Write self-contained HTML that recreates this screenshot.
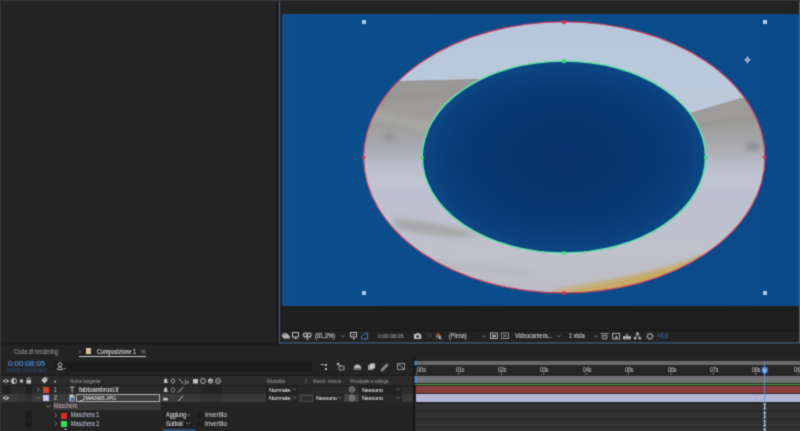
<!DOCTYPE html>
<html><head><meta charset="utf-8">
<style>
*{margin:0;padding:0;box-sizing:border-box}
html,body{width:800px;height:431px;overflow:hidden;background:#1a1a1a;font-family:"Liberation Sans",sans-serif;}
.w{position:absolute;left:0;top:0;width:800px;height:431px;overflow:hidden;filter:url(#soft)}
.a{position:absolute}
.t{position:absolute;white-space:nowrap;transform-origin:0 50%;font-size:6px;line-height:8px;color:#a8a8a8}
</style></head><body><svg width="0" height="0" style="position:absolute"><filter id="soft" x="0" y="0" width="100%" height="100%" color-interpolation-filters="sRGB"><feConvolveMatrix order="3" kernelMatrix="0.028 0.111 0.028 0.111 0.446 0.111 0.028 0.111 0.028" edgeMode="duplicate"/></filter></svg><div class="w">
<div class="a" style="left:0;top:0;width:800px;height:431px;background:#1c1c1c"></div>
<!-- left panel -->
<div class="a" style="left:0;top:0;width:278px;height:343px;background:#232323"></div>
<div class="a" style="left:0;top:0;width:800px;height:1px;background:#3a3a3a"></div>
<!-- viewer panel -->
<div class="a" style="left:276px;top:1px;width:3px;height:342px;background:#1c1c1c"></div>
<div class="a" style="left:279px;top:1px;width:521px;height:342.5px;background:#222222;border-left:1.2px solid #51618a;border-bottom:2px solid #34475f"></div>
<!-- canvas -->
<svg class="a" style="left:282px;top:14px" width="518" height="292" viewBox="282 14 518 292">
 <defs>
  <linearGradient id="ih" x1="0" y1="0" x2="1" y2="0">
   <stop offset="0.00" stop-color="rgb(10,70,132)"/>
   <stop offset="0.10" stop-color="rgb(10,68,129)"/>
   <stop offset="0.20" stop-color="rgb(9,63,122)"/>
   <stop offset="0.30" stop-color="rgb(8,57,115)"/>
   <stop offset="0.40" stop-color="rgb(7,53,109)"/>
   <stop offset="0.50" stop-color="rgb(7,52,108)"/>
   <stop offset="0.60" stop-color="rgb(7,53,109)"/>
   <stop offset="0.70" stop-color="rgb(8,57,115)"/>
   <stop offset="0.80" stop-color="rgb(9,63,122)"/>
   <stop offset="0.90" stop-color="rgb(10,68,129)"/>
   <stop offset="1.00" stop-color="rgb(10,70,132)"/>
  </linearGradient>
  <radialGradient id="ig" cx="0.5" cy="0.5" r="0.5">
   <stop offset="0" stop-color="#06326a"/>
   <stop offset="0.5" stop-color="#07376e"/>
   <stop offset="0.75" stop-color="#083c75"/>
   <stop offset="0.9" stop-color="#0a417d"/>
   <stop offset="1" stop-color="#0b4886"/>
  </radialGradient>
  <linearGradient id="cv" x1="0" y1="0" x2="1" y2="0">
   <stop offset="0" stop-color="#0c5192"/>
   <stop offset="0.03" stop-color="#0b4e8c"/>
   <stop offset="1" stop-color="#0a4a88"/>
  </linearGradient>
  <linearGradient id="sky" x1="0" y1="21" x2="0" y2="120" gradientUnits="userSpaceOnUse">
   <stop offset="0" stop-color="#b6c6db"/>
   <stop offset="0.5" stop-color="#bac8db"/>
   <stop offset="1" stop-color="#bfcada"/>
  </linearGradient>
  <linearGradient id="hill" x1="0" y1="78" x2="0" y2="172" gradientUnits="userSpaceOnUse">
   <stop offset="0" stop-color="#9a9896"/>
   <stop offset="0.5" stop-color="#9f9e9d"/>
   <stop offset="0.72" stop-color="#a7a8ad"/>
   <stop offset="0.86" stop-color="#b3b6c1"/>
   <stop offset="1" stop-color="#bbbfcd" stop-opacity="0"/>
  </linearGradient>
  <linearGradient id="fog" x1="0" y1="150" x2="0" y2="295" gradientUnits="userSpaceOnUse">
   <stop offset="0" stop-color="#babecc"/>
   <stop offset="0.3" stop-color="#bdc1cf"/>
   <stop offset="0.7" stop-color="#bfc1cc"/>
   <stop offset="1" stop-color="#bcbbc3"/>
  </linearGradient>
  <filter id="bl" x="-10%" y="-10%" width="120%" height="120%"><feGaussianBlur stdDeviation="2.5"/></filter>
  <filter id="bl2" x="-10%" y="-10%" width="120%" height="120%"><feGaussianBlur stdDeviation="1.3"/></filter>
  <filter id="bl1" x="-10%" y="-10%" width="120%" height="120%"><feGaussianBlur stdDeviation="0.7"/></filter>
  <clipPath id="ring"><path clip-rule="evenodd" d="M363.7 157.4 A200.6 135.5 0 1 0 764.9 157.4 A200.6 135.5 0 1 0 363.7 157.4 Z M422.2 157 A141.7 96 0 1 0 705.6 157 A141.7 96 0 1 0 422.2 157 Z"/></clipPath>
 </defs>
 <rect x="282" y="14" width="518" height="292" fill="url(#cv)"/>
 <g clip-path="url(#ring)">
  <rect x="350" y="15" width="430" height="285" fill="url(#sky)"/>
  <rect x="350" y="140" width="430" height="160" fill="url(#fog)"/>
  <path d="M350 84 L399 81 L475 79 L520 80 L520 168 L350 168 Z" fill="url(#hill)" filter="url(#bl1)"/>
  <path d="M660 118 L693 112 L741 98 L780 95 L780 172 L660 172 Z" fill="url(#hill)" filter="url(#bl1)"/>
  <g filter="url(#bl)">
   <path d="M368 108 L400 116 L440 124 L475 130 L475 136 L420 130 L368 118Z" fill="#b0afaa" opacity="0.5"/>
   <path d="M372 96 L420 92 L470 90 L470 94 L420 97 L372 101Z" fill="#8e8d8a" opacity="0.5"/>
   <path d="M690 125 L730 118 L770 116 L770 121 L730 123 L690 130Z" fill="#8e8d8a" opacity="0.45"/>
   <ellipse cx="389" cy="137" rx="5" ry="2" fill="#76787c" opacity="0.7"/>
   <ellipse cx="753" cy="147" rx="7" ry="3.5" fill="#7c8086" opacity="0.75"/>
   <path d="M700 146 L745 145 L745 149 L700 150Z" fill="#b5b3ad" opacity="0.6"/>
   <path d="M392 219 Q430 219 482 236 Q450 240 398 229Z" fill="#a2a1a2" opacity="0.8"/>
   <path d="M400 258 Q460 262 530 270 L530 275 Q460 270 400 264Z" fill="#b5b4b9" opacity="0.5"/>
   <rect x="360" y="176" width="420" height="12" fill="#c6c8d3" opacity="0.5"/>
  </g>
  <g filter="url(#bl2)">
   <path d="M705.7 256.6 L702.6 258.6 L699.4 260.6 L696.2 262.5 L692.9 264.3 L689.6 266.1 L686.2 267.9 L682.8 269.6 L679.3 271.3 L675.7 272.9 L672.1 274.5 L668.5 276.0 L664.8 277.4 L661.0 278.8 L657.2 280.2 L653.4 281.5 L649.6 282.7 L645.7 283.9 L641.7 285.0 L637.8 286.1 L633.8 287.1 L629.7 288.1 L625.7 289.0 L621.6 289.9 L617.5 290.7 L613.4 291.4 L609.2 292.1 L605.0 292.7 L600.8 293.2 L596.6 293.7 L592.4 294.2 L588.2 294.5 L583.9 294.8 L579.7 295.1 L575.4 295.3 L571.1 295.4 L566.8 295.5 L562.6 295.5 L558.3 295.4 L554.0 295.3 L549.8 295.2 L550.0 292.2 L554.2 290.0 L558.4 288.8 L562.6 287.9 L566.8 287.1 L571.0 286.2 L575.2 285.5 L579.4 284.7 L583.5 283.9 L587.7 283.2 L591.8 282.4 L595.9 281.7 L600.0 280.9 L604.0 280.1 L608.0 279.4 L612.0 278.6 L616.0 277.8 L619.9 277.0 L623.8 276.2 L627.6 275.4 L631.5 274.6 L635.3 273.8 L639.0 272.9 L642.7 272.1 L646.4 271.2 L650.1 270.3 L653.7 269.4 L657.3 268.5 L660.9 267.5 L664.5 266.5 L668.0 265.5 L671.5 264.4 L675.0 263.4 L678.5 262.2 L681.9 261.1 L685.4 259.9 L688.9 258.7 L692.3 257.5 L695.9 256.3 L699.5 255.1 L703.6 254.5Z" fill="#c2b07e" opacity="0.85"/>
   <path d="M689.6 266.1 L687.1 267.5 L684.5 268.8 L681.9 270.0 L679.3 271.3 L676.6 272.5 L673.9 273.7 L671.2 274.8 L668.5 276.0 L665.7 277.1 L662.9 278.1 L660.1 279.2 L657.2 280.2 L654.4 281.2 L651.5 282.1 L648.6 283.0 L645.7 283.9 L642.7 284.8 L639.8 285.6 L636.8 286.4 L633.8 287.1 L630.8 287.9 L627.7 288.6 L624.7 289.2 L621.6 289.9 L618.5 290.5 L615.4 291.0 L612.3 291.6 L609.2 292.1 L606.1 292.5 L602.9 293.0 L599.8 293.4 L596.6 293.7 L593.4 294.0 L590.3 294.3 L587.1 294.6 L583.9 294.8 L580.7 295.0 L577.5 295.2 L574.3 295.3 L571.1 295.4 L571.0 292.4 L574.2 290.8 L577.3 289.9 L580.5 289.1 L583.6 288.4 L586.7 287.7 L589.8 287.1 L592.9 286.4 L596.0 285.8 L599.1 285.2 L602.1 284.5 L605.2 283.9 L608.2 283.3 L611.2 282.6 L614.3 282.0 L617.2 281.4 L620.2 280.7 L623.2 280.1 L626.1 279.5 L629.0 278.8 L631.9 278.1 L634.8 277.5 L637.7 276.8 L640.5 276.1 L643.4 275.5 L646.2 274.8 L649.0 274.1 L651.8 273.4 L654.6 272.6 L657.4 271.9 L660.1 271.2 L662.9 270.4 L665.6 269.6 L668.3 268.9 L671.0 268.1 L673.7 267.3 L676.5 266.4 L679.2 265.6 L681.9 264.8 L684.7 264.1 L687.7 263.8Z" fill="#c6aa60" opacity="0.95"/>
  </g>
 </g>
 <ellipse cx="563.9" cy="157" rx="141.7" ry="96" fill="url(#ig)"/>
 <ellipse cx="564.3" cy="157.4" rx="200.6" ry="135.5" fill="none" stroke="#cc4560" stroke-width="1.2"/>
 <ellipse cx="563.9" cy="157" rx="141.7" ry="96" fill="none" stroke="#66e2a6" stroke-width="1.6"/>
 <g fill="#d8304e"><circle cx="564.1" cy="21.9" r="2.2"/><circle cx="564.1" cy="292.9" r="2"/><circle cx="363.6" cy="157.4" r="1.7"/><circle cx="764.6" cy="157.4" r="1.7"/></g>
 <g fill="#3fe07e"><circle cx="564" cy="61" r="2.3"/><circle cx="564" cy="253" r="1.9"/><circle cx="422.2" cy="157.5" r="1.8"/><circle cx="705.6" cy="157.5" r="1.8"/></g>
 <g fill="#abc8ee"><rect x="362" y="20" width="4" height="4"/><rect x="763" y="20" width="4" height="4"/><rect x="362" y="291" width="4" height="4"/><rect x="763" y="291" width="4" height="4"/></g>
 <path d="M747.5 56.2 Q748.3 59 751.1 59.8 Q748.3 60.6 747.5 63.4 Q746.7 60.6 743.9 59.8 Q746.7 59 747.5 56.2Z" fill="#dfe6f0"/>
 <circle cx="747.5" cy="59.8" r="1" fill="#3a5a86"/>
</svg>
<!-- viewer toolbar -->
<div class="a" style="left:280px;top:306px;width:520px;height:24px;background:#1f1f1f"></div>
<div class="a" style="left:280px;top:330px;width:520px;height:11px;background:#222222;border-top:1px solid #161616"></div>
<svg class="a" style="left:280px;top:330px" width="520" height="12" viewBox="280 330 520 12">
 <g fill="#bdbdbd">
  <path d="M281.5 335.5 l2.5 -2.5 h2.5 l3.5 3.5 v2 h-6.5z" fill="#b4b4b4"/><path d="M283.5 335.2 l1.5 -1.2 h1.5" stroke="#2a2a2a" stroke-width="0.6" fill="none"/>
  <rect x="292.5" y="332.5" width="6" height="4.5" fill="none" stroke="#bdbdbd" stroke-width="1"/><rect x="294" y="338" width="3" height="1"/>
  <circle cx="305.5" cy="335" r="2" fill="none" stroke="#c8c8c8" stroke-width="1.1"/><circle cx="309" cy="335" r="2" fill="none" stroke="#c8c8c8" stroke-width="1.1"/><rect x="306.5" y="338" width="2" height="1.5"/>
  <rect x="350.5" y="332.5" width="6" height="4.5" fill="none" stroke="#bdbdbd" stroke-width="1"/><rect x="352.5" y="334.3" width="2" height="1"/><rect x="353" y="338" width="1.5" height="1.5"/>
  <path d="M414 334 h2 l0.8 -1.1 h1.8 l0.8 1.1 h1.8 v5 h-7.2 z"/><circle cx="417.6" cy="336.6" r="1.3" fill="#2a2a2a"/>
 </g>
 <path d="M341 335.5 l1.8 1.6 l1.8 -1.6 M482 335.5 l1.8 1.6 l1.8 -1.6 M557 335.5 l1.8 1.6 l1.8 -1.6 M594 335.5 l1.8 1.6 l1.8 -1.6" fill="none" stroke="#8a8a8a" stroke-width="0.8"/>
 <path d="M361.5 339 h6 v-6 h-2.5 l-3.5 3.5z" fill="none" stroke="#3d7bd0" stroke-width="1"/>
 <path d="M438 332.5 l2.5 3 h-5z" fill="#c84040"/><path d="M435.5 335.5 h3 l-1.5 3.5z" fill="#40a050"/><path d="M438.5 335.5 h2 l0.8 3.5 h-2.5z" fill="#c0b0c0"/><path d="M440.5 337.5 l2 2 h-2.5z" fill="#4a80e0"/>
 <path d="M426 339 l5 -5 M427 334 h4 v4" fill="none" stroke="#3e3e3e" stroke-width="1"/>
 <rect x="490.5" y="333" width="7" height="5.5" fill="none" stroke="#a8a8a8" stroke-width="1"/><rect x="492" y="334.8" width="4" height="2.5" fill="#a8a8a8"/>
 <rect x="501.5" y="333" width="7" height="5.5" fill="none" stroke="#8a8a8a" stroke-width="1"/><path d="M503 334.5 l4 2.5 M507 334.5 l-4 2.5" stroke="#8a8a8a" stroke-width="0.8"/>
 <g fill="none" stroke="#b8b8b8" stroke-width="0.9">
  <path d="M600.5 333.8 h8 M602.3 335.8 h4.6 v3 h-4.6z"/>
  <rect x="612.6" y="333.4" width="7" height="5.6"/>
  <path d="M623.5 336 v3 h7 v-3"/>
 </g>
 <path d="M614.5 338.3 l1.8 -2.6 l1.8 2.6z" fill="#b8b8b8"/>
 <path d="M623.8 336.2 h6.4 v2.4 h-6.4z M625.5 335.5 l1.5 -2 l1.5 2z" fill="#b8b8b8"/>
 <circle cx="637.5" cy="333.6" r="1.3" fill="#c0c0c0"/><circle cx="635.2" cy="338.2" r="1.3" fill="#c0c0c0"/><circle cx="639.8" cy="338.2" r="1.3" fill="#c0c0c0"/>
 <path d="M637.5 334 l-2.3 4 M637.5 334 l2.3 4" stroke="#c0c0c0" stroke-width="0.8"/>
 <circle cx="650" cy="336.3" r="2.6" fill="none" stroke="#c4c4c4" stroke-width="1.5" stroke-dasharray="1.2 0.6"/>
</svg>
<div class="a" style="left:799px;top:1px;width:1px;height:342px;background:#4d5d80"></div>
<!-- bottom panel -->
<div class="a" style="left:0;top:344.5px;width:800px;height:87px;background:#232323"></div>
<div class="a" style="left:86px;top:348.3px;width:5.4px;height:5.4px;background:#d4c69c"></div>
<div class="a" style="left:78.5px;top:356.3px;width:67.5px;height:1px;background:#c8c8c8"></div>
<div class="a" style="left:55px;top:362px;width:257px;height:8.6px;background:#1a1a1a"></div>
<!-- header row -->
<div class="a" style="left:0;top:375px;width:413px;height:1px;background:#1b1b1b"></div>
<div class="a" style="left:0;top:376px;width:413px;height:9px;background:#2b2b2b"></div>
<div class="a" style="left:0;top:385px;width:413px;height:1px;background:#1f1f1f"></div>
<!-- row1 -->
<div class="a" style="left:0;top:386px;width:413px;height:7.5px;background:#2a2a2a"></div>
<div class="a" style="left:3px;top:386px;width:6.5px;height:7.5px;background:#1f1f1f"></div>
<div class="a" style="left:25px;top:386px;width:7px;height:7.5px;background:#1f1f1f"></div>
<div class="a" style="left:43px;top:387px;width:6px;height:6px;background:#d4402f"></div>
<div class="a" style="left:265.5px;top:386px;width:33.5px;height:7.5px;background:#222"></div>
<div class="a" style="left:301px;top:386.5px;width:11px;height:6.5px;background:#262626"></div>
<div class="a" style="left:358.5px;top:386px;width:43.5px;height:7.5px;background:#222"></div>
<div class="a" style="left:200px;top:386px;width:22px;height:7.5px;background:#232323"></div>
<div class="a" style="left:0;top:393.5px;width:413px;height:0.5px;background:#1f1f1f"></div>
<!-- row2 -->
<div class="a" style="left:0;top:394px;width:413px;height:8px;background:#3a3a3a"></div>
<div class="a" style="left:18px;top:394px;width:7px;height:8px;background:#353535"></div>
<div class="a" style="left:25px;top:394px;width:7px;height:8px;background:#303030"></div>
<div class="a" style="left:43px;top:395px;width:6px;height:6px;background:#c3c3ee"></div>
<div class="a" style="left:76px;top:394.2px;width:84px;height:7.8px;border:0.9px solid #b0b0b0;background:#3d3d3d"></div>
<div class="a" style="left:265.5px;top:394px;width:33.5px;height:8px;background:#262626"></div>
<div class="a" style="left:300.5px;top:394.5px;width:12px;height:7px;background:#2e2e2e;border:0.5px solid #4a4a4a"></div>
<div class="a" style="left:313px;top:394px;width:31px;height:8px;background:#262626"></div>
<div class="a" style="left:345px;top:394px;width:13px;height:8px;background:#444"></div>
<div class="a" style="left:358.5px;top:394px;width:43.5px;height:8px;background:#262626"></div>
<div class="a" style="left:200px;top:394px;width:22px;height:8px;background:#333"></div>
<!-- mask rows -->
<div class="a" style="left:0;top:402px;width:413px;height:29px;background:#242424"></div>
<div class="a" style="left:0;top:402px;width:52px;height:29px;background:#262626"></div>
<div class="a" style="left:52.5px;top:402.2px;width:108px;height:8.2px;background:#3a3a3a"></div>
<div class="a" style="left:25px;top:411px;width:7px;height:7.5px;background:#1b1b1b"></div>
<div class="a" style="left:25px;top:419.5px;width:7px;height:7.5px;background:#1b1b1b"></div>
<div class="a" style="left:61px;top:412.5px;width:6px;height:6px;background:#e0282e"></div>
<div class="a" style="left:61px;top:421px;width:6px;height:6px;background:#2ee05a"></div>
<div class="a" style="left:164px;top:411.5px;width:29px;height:7.5px;background:#202020"></div>
<div class="a" style="left:164px;top:420px;width:29px;height:7.5px;background:#202020"></div>
<div class="a" style="left:197px;top:412px;width:6px;height:6px;background:#1e1e1e"></div>
<div class="a" style="left:197px;top:420.5px;width:6px;height:6px;background:#1e1e1e"></div>
<div class="a" style="left:163px;top:428.5px;width:32px;height:3px;background:#2a4f7a"></div>

<!-- timeline toolbar icons -->
<svg class="a" style="left:0;top:358px" width="413" height="73" viewBox="0 358 413 73">
 <g fill="#bcbcbc">
  <circle cx="60" cy="364.6" r="1.9" fill="none" stroke="#c8c8c8" stroke-width="0.9"/>
  <path d="M57.3 369.6 q0.6 -2.6 2.7 -2.6 q2.1 0 2.7 2.6z" fill="none" stroke="#c8c8c8" stroke-width="0.9"/>
  <path d="M63.6 368.2 h2.6 l-1.3 1.3z"/>
  <path d="M321 364 h3 v1 h-3z M325 364 h2 v2 h-2z M326 366 v2 M325 368 h2 v2 h-2z"/>
  <path d="M338 364 l3 2 M339 366 h5 v4 h-5z" stroke="#bcbcbc" stroke-width="0.8" fill="none"/><circle cx="338" cy="364" r="1.2"/>
  <path d="M354 368 a3.5 3.5 0 0 1 7 0 z M353.5 368.5 h8 v1 h-8z"/>
  <rect x="368" y="365" width="5" height="5" fill="#9a9a9a"/><rect x="370" y="363.5" width="5" height="5" fill="#c4c4c4"/>
  <path d="M381 369 l5 -5 a1.3 1.3 0 0 1 2 2 l-5 5 a1.3 1.3 0 0 1 -2 -2z" fill="#8a8a8a"/>
  <rect x="397.5" y="363.5" width="7" height="6" fill="none" stroke="#9a9a9a" stroke-width="0.9"/><path d="M398 364 l6 5" stroke="#9a9a9a" stroke-width="0.9"/>
 </g>
 <!-- header icons -->
 <g fill="#c2c2c2">
  <path d="M2.8 381 Q6 377.6 9.2 381 Q6 384.4 2.8 381Z" fill="#c8c8c8"/><circle cx="6" cy="381" r="1.1" fill="#2c2c2c"/>
  <circle cx="14" cy="381" r="2.6" fill="none" stroke="#c8c8c8" stroke-width="0.9"/><path d="M14 378.4 a2.6 2.6 0 0 0 0 5.2z"/>
  <rect x="20" y="379.5" width="3" height="3"/>
  <rect x="26.5" y="380" width="4.5" height="3.5"/><path d="M27.5 380 v-1.2 a1.25 1.25 0 0 1 2.5 0 v1.2" fill="none" stroke="#c2c2c2" stroke-width="0.8"/>
  <path d="M41.2 380.2 l3 -3 h3.2 v3.2 l-3 3z"/><circle cx="46.2" cy="378.3" r="0.6" fill="#2c2c2c"/>
  <circle cx="55" cy="381.5" r="1"/>
  <path d="M163.5 383 h4.5 l-0.8 -1 v-2 a1.5 1.5 0 0 0 -3 0 v2z"/>
  <path d="M173 378.5 l2 2.5 l-2 2.5 l-2 -2.5z" fill="none" stroke="#b0b0b0" stroke-width="0.9"/>
  <path d="M178.5 378.5 l5 5" stroke="#c0c0c0" stroke-width="0.9"/>
  <rect x="193" y="379" width="5" height="4.5"/>
  <circle cx="203" cy="381" r="2.5" fill="none" stroke="#b0b0b0" stroke-width="1"/>
  <circle cx="210.5" cy="381" r="2.5"/><path d="M208.5 382 a2.5 2.5 0 0 0 4 -1.5z" fill="#333"/>
  <circle cx="218" cy="381" r="2.5" fill="none" stroke="#b8b8b8" stroke-width="0.9"/><circle cx="218" cy="381" r="0.8"/>
  <path d="M163.5 392 h4.5 l-0.8 -1 v-2 a1.5 1.5 0 0 0 -3 0 v2z"/>
  <path d="M173 387.5 l2 2.5 l-2 2.5 l-2 -2.5z" fill="none" stroke="#a0a0a0" stroke-width="0.8"/>
  <path d="M178 392.5 l5 -5" stroke="#c8c8c8" stroke-width="1"/>
  <path d="M163 400.5 h5 v-1 a2.5 2 0 0 0 -5 0z"/>
  <path d="M178 401 l5 -5" stroke="#c8c8c8" stroke-width="1"/>
  <path d="M2.8 398 Q6 394.6 9.2 398 Q6 401.4 2.8 398Z" fill="#d0d0d0"/><circle cx="6" cy="398" r="1.1" fill="#3a3a3a"/>
 </g>
 <text x="184.5" y="383.5" font-family="Liberation Serif" font-style="italic" font-size="6.5" fill="#c0c0c0">fx</text>
</svg>
<svg class="a" style="left:0;top:340px" width="413" height="91" viewBox="0 340 413 91">
 <g fill="none" stroke-width="0.9" stroke-linecap="round" stroke-linejoin="round">
  <path d="M37.5 388 l1.8 1.7 l-1.8 1.7" stroke="#6f8a78"/>
  <path d="M36.5 397 l1.8 1.8 l1.8 -1.8" stroke="#6f8a6f"/>
  <path d="M46.5 405.5 l1.8 1.8 l1.8 -1.8" stroke="#a08a90"/>
  <path d="M55 413.5 l1.8 1.7 l-1.8 1.7" stroke="#888"/>
  <path d="M55 422 l1.8 1.7 l-1.8 1.7" stroke="#888"/>
  <path d="M79 350.7 l1.6 1.6 M80.6 350.7 l-1.6 1.6" stroke="#6a6a6a" stroke-width="0.7"/>
  <path d="M141.5 350.2 h3.5 M141.5 351.6 h3.5 M141.5 353 h3.5" stroke="#777" stroke-width="0.8"/>
  <path d="M186.5 414 l1.8 1.6 l1.8 -1.6 M186.5 422.5 l1.8 1.6 l1.8 -1.6" stroke="#999" stroke-width="0.7"/>
  <path d="M292.5 388.5 l1.8 1.6 l1.8 -1.6 M292.5 397 l1.8 1.6 l1.8 -1.6 M338.5 397 l1.8 1.6 l1.8 -1.6 M396.5 388.5 l1.8 1.6 l1.8 -1.6 M396.5 397 l1.8 1.6 l1.8 -1.6" stroke="#888" stroke-width="0.7"/>
  <circle cx="352" cy="389.5" r="3" fill="#5e5e5e" stroke="#6e6e6e" stroke-width="0.8"/>
  <circle cx="352" cy="398" r="3" fill="#6a6a6a" stroke="#7a7a7a" stroke-width="0.8"/>
  <path d="M351 389.5 a1 1 0 1 1 1.5 0.8 M351 398 a1 1 0 1 1 1.5 0.8" stroke="#8a8a8a" stroke-width="0.6"/>
 </g>
 <g fill="#c8c8c8">
  <path d="M69.8 387 h4.6 M72.1 387 v5.5" stroke="#c8c8c8" stroke-width="0.9" fill="none"/>
  <path d="M69.5 394.5 h3.5 l1.5 1.5 v5.5 h-5z"/>
 </g>
 <path d="M70.7 398.5 l1.5 -1.5 l1.6 1.6 v2.2 h-3.1z" fill="#2a5fb0"/>
 <path d="M64 430 l1.5 -2 l1.5 2z" fill="#bbb"/>
</svg>
<!-- timeline -->
<div class="a" style="left:404px;top:394px;width:9px;height:8px;background:#3a3a3a"></div>
<div class="a" style="left:413px;top:358px;width:1.5px;height:73px;background:#141414"></div>
<div class="a" style="left:414.5px;top:358px;width:386px;height:73px;background:#262626"></div>
<div class="a" style="left:415px;top:360.8px;width:385px;height:4px;background:#6a6a6a"></div>
<div class="a" style="left:416px;top:375.8px;width:384px;height:7.2px;background:#727272"></div>
<div class="a" style="left:415px;top:384px;width:385px;height:2px;background:#40a940"></div>
<div class="a" style="left:414.5px;top:385px;width:386px;height:1px;background:#232323"></div>
<div class="a" style="left:416px;top:386.4px;width:384px;height:6.6px;background:#8b3e3e"></div>
<div class="a" style="left:414.5px;top:393.4px;width:386px;height:1px;background:#262626"></div>
<div class="a" style="left:416px;top:394px;width:384px;height:7.7px;background:#b4b4d4"></div>
<div class="a" style="left:414.5px;top:402px;width:386px;height:29px;background:#323232"></div>
<div class="a" style="left:414.5px;top:402px;width:386px;height:1.5px;background:#24252a"></div>
<div class="a" style="left:414.5px;top:410.2px;width:386px;height:1.4px;background:#282828"></div>
<div class="a" style="left:414.5px;top:418.6px;width:386px;height:1.4px;background:#282828"></div>
<div class="a" style="left:414.5px;top:426.8px;width:386px;height:1.4px;background:#282828"></div>
<svg class="a" style="left:413px;top:356px" width="387" height="75" viewBox="413 356 387 75">
 <g stroke="#8a8a8a" stroke-width="0.8">
  <line x1="416.5" y1="372.5" x2="416.5" y2="375" />
  <line x1="458.9" y1="372.5" x2="458.9" y2="375" />
  <line x1="501.3" y1="372.5" x2="501.3" y2="375" />
  <line x1="543.7" y1="372.5" x2="543.7" y2="375" />
  <line x1="586.1" y1="372.5" x2="586.1" y2="375" />
  <line x1="628.5" y1="372.5" x2="628.5" y2="375" />
  <line x1="670.9" y1="372.5" x2="670.9" y2="375" />
  <line x1="713.3" y1="372.5" x2="713.3" y2="375" />
  <line x1="755.7" y1="372.5" x2="755.7" y2="375" />
  <line x1="798.1" y1="372.5" x2="798.1" y2="375" />
 </g>
 <line x1="756.5" y1="365" x2="756.5" y2="402" stroke="#b05050" stroke-opacity="0.12" stroke-width="1"/>
 <path d="M414.5 361 h2 v4 h-2z M414.5 376 h2.2 v7 h-2.2z" fill="#4a90e0"/>
 <line x1="764.6" y1="361" x2="764.6" y2="431" stroke="#5d95e0" stroke-width="1" stroke-opacity="0.85"/>
 <path d="M761.7 367.3 h6 v4.8 l-3 2.8 l-3 -2.8z" fill="#3f86dc"/>
 <path d="M763 368.5 h3.4 v3 l-1.7 1.6 l-1.7 -1.6z" fill="#8ab8f0"/>
 <g fill="#d8d8d8">
  <path d="M763.2 403.5 h3 v0.9 h-1 v4 h1 v0.9 h-3 v-0.9 h1 v-4 h-1z"/>
  <path d="M763.2 412 h3 v0.9 h-1 v4 h1 v0.9 h-3 v-0.9 h1 v-4 h-1z"/>
  <path d="M763.2 420.4 h3 v0.9 h-1 v4 h1 v0.9 h-3 v-0.9 h1 v-4 h-1z"/>
  <path d="M763.2 428.8 h3 v0.9 h-1 v3 h-1 v-3 h-1z"/>
 </g>
</svg>
<div class="a" style="left:0;top:0;width:1px;height:431px;background:#363636"></div>
<div class="t" style="left:14.00px;top:346.80px;font-size:7px;line-height:10px;color:#8a8a8a;-webkit-text-stroke:0.18px #8a8a8a;transform:scaleX(0.791);">Coda di rendering</div>
<div class="t" style="left:97.00px;top:346.80px;font-size:7px;line-height:10px;color:#d0d0d0;-webkit-text-stroke:0.18px #d0d0d0;transform:scaleX(0.777);">Composizione 1</div>
<div class="t" style="left:8.30px;top:358.60px;font-size:7.6px;line-height:10px;color:#4d8fe4;-webkit-text-stroke:0.18px #4d8fe4;transform:scaleX(1.036);">0:00:08:05</div>
<div class="t" style="left:6.00px;top:366.30px;font-size:4.5px;line-height:10px;color:#27466e;-webkit-text-stroke:0.18px #27466e;transform:scaleX(1.162);">00205 (25,00 fps)</div>
<div class="t" style="left:315.00px;top:331.30px;font-size:6.5px;line-height:10px;color:#bdbdbd;-webkit-text-stroke:0.18px #bdbdbd;transform:scaleX(0.879);">(81,3%)</div>
<div class="t" style="left:377.50px;top:331.00px;font-size:6px;line-height:10px;color:#8c8c8c;-webkit-text-stroke:0.18px #8c8c8c;transform:scaleX(0.899);">0:00:08:05</div>
<div class="t" style="left:449.00px;top:331.30px;font-size:6.5px;line-height:10px;color:#bdbdbd;-webkit-text-stroke:0.18px #bdbdbd;transform:scaleX(0.840);">(Piena)</div>
<div class="t" style="left:514.60px;top:331.30px;font-size:6.5px;line-height:10px;color:#bdbdbd;-webkit-text-stroke:0.18px #bdbdbd;transform:scaleX(0.853);">Videocamera...</div>
<div class="t" style="left:568.70px;top:331.30px;font-size:6.5px;line-height:10px;color:#bdbdbd;-webkit-text-stroke:0.18px #bdbdbd;transform:scaleX(0.840);">1 vista</div>
<div class="t" style="left:657.00px;top:331.30px;font-size:6.5px;line-height:10px;color:#3a6aa8;-webkit-text-stroke:0.18px #3a6aa8;transform:scaleX(0.857);">+0,0</div>
<div class="t" style="left:70.00px;top:376.00px;font-size:5.5px;line-height:10px;color:#7e7e7e;-webkit-text-stroke:0.18px #7e7e7e;transform:scaleX(0.814);">Nome sorgente</div>
<div class="t" style="left:266.50px;top:376.00px;font-size:5.5px;line-height:10px;color:#7e7e7e;-webkit-text-stroke:0.18px #7e7e7e;transform:scaleX(0.865);">Modalità</div>
<div class="t" style="left:305.00px;top:376.00px;font-size:5.5px;line-height:10px;color:#7e7e7e;-webkit-text-stroke:0.18px #7e7e7e;transform:scaleX(0.596);">T</div>
<div class="t" style="left:313.00px;top:376.00px;font-size:5.5px;line-height:10px;color:#7e7e7e;-webkit-text-stroke:0.18px #7e7e7e;transform:scaleX(0.763);">Masch. mascia</div>
<div class="t" style="left:349.50px;top:376.00px;font-size:5.5px;line-height:10px;color:#7e7e7e;-webkit-text-stroke:0.18px #7e7e7e;transform:scaleX(0.807);">Principale e collega</div>
<div class="t" style="left:54.00px;top:384.50px;font-size:7px;line-height:10px;color:#b8b8b8;-webkit-text-stroke:0.18px #b8b8b8;transform:scaleX(0.644);">1</div>
<div class="t" style="left:78.50px;top:384.60px;font-size:6.3px;line-height:10px;color:#cccccc;-webkit-text-stroke:0.18px #cccccc;transform:scaleX(0.964);">fabioambrosi.it</div>
<div class="t" style="left:268.50px;top:384.60px;font-size:6px;line-height:10px;color:#c4c4c4;-webkit-text-stroke:0.18px #c4c4c4;transform:scaleX(0.948);">Normale</div>
<div class="t" style="left:362.00px;top:384.60px;font-size:6px;line-height:10px;color:#c4c4c4;-webkit-text-stroke:0.18px #c4c4c4;transform:scaleX(0.887);">Nessuno</div>
<div class="t" style="left:54.00px;top:393.00px;font-size:7px;line-height:10px;color:#b8b8b8;-webkit-text-stroke:0.18px #b8b8b8;transform:scaleX(0.772);">2</div>
<div class="t" style="left:79.60px;top:392.90px;font-size:6px;line-height:10px;color:#d0d0d0;-webkit-text-stroke:0.18px #d0d0d0;transform:scaleX(0.850);">_2MA0965.JPG</div>
<div class="t" style="left:268.50px;top:392.70px;font-size:6px;line-height:10px;color:#c4c4c4;-webkit-text-stroke:0.18px #c4c4c4;transform:scaleX(0.948);">Normale</div>
<div class="t" style="left:316.00px;top:392.70px;font-size:6px;line-height:10px;color:#c4c4c4;-webkit-text-stroke:0.18px #c4c4c4;transform:scaleX(0.887);">Nessuno</div>
<div class="t" style="left:362.00px;top:392.70px;font-size:6px;line-height:10px;color:#c4c4c4;-webkit-text-stroke:0.18px #c4c4c4;transform:scaleX(0.887);">Nessuno</div>
<div class="t" style="left:54.40px;top:401.40px;font-size:6.5px;line-height:10px;color:#b49ca4;-webkit-text-stroke:0.18px #b49ca4;transform:scaleX(0.827);">Maschere</div>
<div class="t" style="left:70.60px;top:410.30px;font-size:7px;line-height:10px;color:#a9b0bc;-webkit-text-stroke:0.18px #a9b0bc;transform:scaleX(0.770);">Maschera 1</div>
<div class="t" style="left:166.20px;top:410.30px;font-size:7px;line-height:10px;color:#c8c8c8;-webkit-text-stroke:0.18px #c8c8c8;transform:scaleX(0.790);">Aggiung</div>
<div class="t" style="left:204.50px;top:410.30px;font-size:6.5px;line-height:10px;color:#b8b8b8;-webkit-text-stroke:0.18px #b8b8b8;transform:scaleX(0.948);">Invertito</div>
<div class="t" style="left:70.60px;top:418.70px;font-size:7px;line-height:10px;color:#a9b0bc;-webkit-text-stroke:0.18px #a9b0bc;transform:scaleX(0.770);">Maschera 2</div>
<div class="t" style="left:166.20px;top:418.70px;font-size:7px;line-height:10px;color:#c8c8c8;-webkit-text-stroke:0.18px #c8c8c8;transform:scaleX(0.830);">Sottrai</div>
<div class="t" style="left:204.50px;top:418.70px;font-size:6.5px;line-height:10px;color:#b8b8b8;-webkit-text-stroke:0.18px #b8b8b8;transform:scaleX(0.948);">Invertito</div>
<div class="t" style="left:417.00px;top:364.50px;font-size:7px;line-height:10px;color:#b4b4b4;-webkit-text-stroke:0.18px #b4b4b4;transform:scaleX(0.799);">00s</div>
<div class="t" style="left:455.65px;top:364.50px;font-size:7px;line-height:10px;color:#b4b4b4;-webkit-text-stroke:0.18px #b4b4b4;transform:scaleX(0.754);">01s</div>
<div class="t" style="left:498.05px;top:364.50px;font-size:7px;line-height:10px;color:#b4b4b4;-webkit-text-stroke:0.18px #b4b4b4;transform:scaleX(0.754);">02s</div>
<div class="t" style="left:540.45px;top:364.50px;font-size:7px;line-height:10px;color:#b4b4b4;-webkit-text-stroke:0.18px #b4b4b4;transform:scaleX(0.754);">03s</div>
<div class="t" style="left:582.85px;top:364.50px;font-size:7px;line-height:10px;color:#b4b4b4;-webkit-text-stroke:0.18px #b4b4b4;transform:scaleX(0.754);">04s</div>
<div class="t" style="left:625.25px;top:364.50px;font-size:7px;line-height:10px;color:#b4b4b4;-webkit-text-stroke:0.18px #b4b4b4;transform:scaleX(0.754);">05s</div>
<div class="t" style="left:667.65px;top:364.50px;font-size:7px;line-height:10px;color:#b4b4b4;-webkit-text-stroke:0.18px #b4b4b4;transform:scaleX(0.754);">06s</div>
<div class="t" style="left:710.05px;top:364.50px;font-size:7px;line-height:10px;color:#b4b4b4;-webkit-text-stroke:0.18px #b4b4b4;transform:scaleX(0.754);">07s</div>
<div class="t" style="left:752.45px;top:364.50px;font-size:7px;line-height:10px;color:#b4b4b4;-webkit-text-stroke:0.18px #b4b4b4;transform:scaleX(0.754);">08s</div>
<div class="t" style="left:793.50px;top:364.50px;font-size:7px;line-height:10px;color:#b4b4b4;-webkit-text-stroke:0.18px #b4b4b4;transform:scaleX(0.901);">09</div>

</div></body></html>
